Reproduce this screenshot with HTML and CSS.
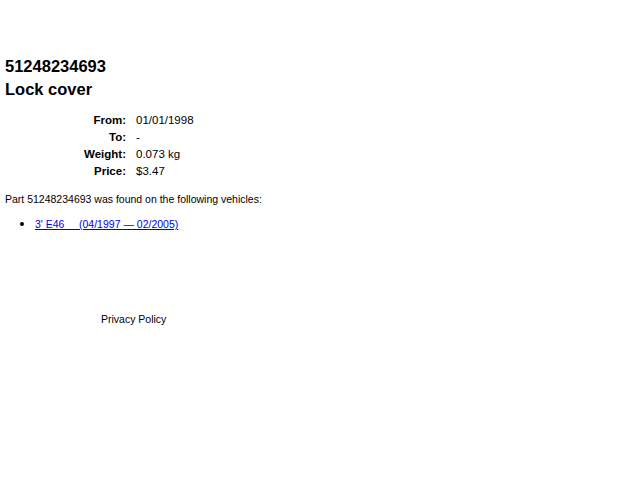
FILE: index.html
```html
<!DOCTYPE html>
<html>
<head>
    <title>51248234693 Lock cover</title>
    <meta charset="utf-8" />
    <link rel="stylesheet" href="styles.css">
</head>
<body>

    <div id="contain">

        <h1 class="part_number">51248234693</h1>
        <h2 class="part_name">Lock cover</h2>

        <table class="part_info">
            <tr>
                <th>From:</th>
                <td>01/01/1998</td>
            </tr>
            <tr>
                <th>To:</th>
                <td>-</td>
            </tr>
            <tr>
                <th>Weight:</th>
                <td>0.073 kg</td>
            </tr>
            <tr>
                <th>Price:</th>
                <td>$3.47</td>
            </tr>
        </table>

        <p class="found_text">Part 51248234693 was found on the following vehicles:</p>

        <ul class="vehicle_list">
            <li><a href="#">3' E46&nbsp;&nbsp;&nbsp;&nbsp; (04/1997 &mdash; 02/2005)</a></li>
        </ul>

    </div>

    <div id="footer">
        <a href="#" class="footer_link">Privacy Policy</a>
    </div>

</body>
</html>
```

FILE: styles.css
```css
body {
    margin: 0;
    padding: 0 5px;
    font-family: "Liberation Sans", Arial, sans-serif;
    font-size: 11.5px;
    color: #000;
}

#contain {
    padding-top: 54px;
}

.part_number {
    margin: 0;
    font-size: 16.5px;
    line-height: 24px;
}

.part_name {
    margin: 0;
    font-size: 16.5px;
    line-height: 23px;
}

.part_info {
    margin-top: 11px;
    border-collapse: collapse;
}

.part_info th {
    width: 121px;
    padding: 0 10px 0 0;
    text-align: right;
    line-height: 17px;
}

.part_info td {
    padding: 0;
    line-height: 17px;
}

.found_text {
    margin: 12px 0 0 0;
    font-size: 10.5px;
    line-height: 14px;
}

.vehicle_list {
    margin: 11px 0 0 0;
    padding-left: 30px;
    font-size: 10.5px;
    line-height: 14px;
}

.vehicle_list li::marker {
    font-size: 13px;
}

.vehicle_list a {
    color: #0000ee;
}

#footer {
    margin-top: 81px;
    padding-left: 96px;
    font-size: 10.5px;
    line-height: 14px;
}

.footer_link {
    color: #000;
    text-decoration: none;
}
```
